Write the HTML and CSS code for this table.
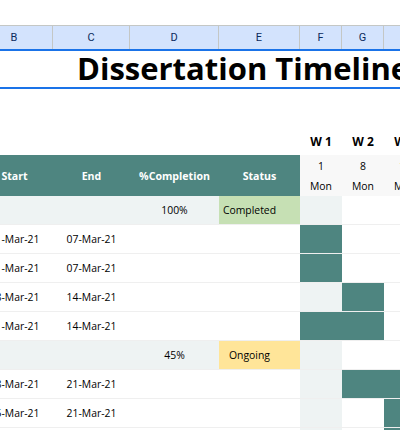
FILE: index.html
```html
<!DOCTYPE html>
<html lang="en-US">
<head>
    <meta charset="UTF-8">
    <title>Dissertation Timeline</title>
    <link rel="stylesheet" href="styles.css">
</head>
<body>

<div class="sheet">

    <div class="row colheads">
        <div>B</div><div>C</div><div>D</div><div>E</div><div>F</div><div>G</div><div>H</div>
    </div>

    <div class="title">Dissertation Timeline</div>

    <div class="gap"></div>

    <div class="row weeks">
        <div></div><div></div><div></div><div></div>
        <div>W 1</div><div>W 2</div><div>W 3</div>
    </div>

    <div class="row heads">
        <div class="th">Start</div>
        <div class="th">End</div>
        <div class="th">%Completion</div>
        <div class="th">Status</div>
        <div class="day"><span>1</span><span>Mon</span></div>
        <div class="day"><span>8</span><span>Mon</span></div>
        <div class="day"><span>15</span><span>Mon</span></div>
    </div>

    <div class="row task phase">
        <div></div><div></div><div>100%</div>
        <div class="status done">Completed</div>
        <div class="now"></div><div></div><div></div>
    </div>
    <div class="row task">
        <div>01-Mar-21</div><div>07-Mar-21</div><div></div><div></div>
        <div class="bar"></div><div></div><div></div>
    </div>
    <div class="row task">
        <div>01-Mar-21</div><div>07-Mar-21</div><div></div><div></div>
        <div class="bar"></div><div></div><div></div>
    </div>
    <div class="row task">
        <div>08-Mar-21</div><div>14-Mar-21</div><div></div><div></div>
        <div class="now"></div><div class="bar"></div><div></div>
    </div>
    <div class="row task">
        <div>01-Mar-21</div><div>14-Mar-21</div><div></div><div></div>
        <div class="bar"></div><div class="bar"></div><div></div>
    </div>

    <div class="row task phase">
        <div></div><div></div><div>45%</div>
        <div class="status ongoing">Ongoing</div>
        <div class="now"></div><div></div><div></div>
    </div>
    <div class="row task">
        <div>08-Mar-21</div><div>21-Mar-21</div><div></div><div></div>
        <div class="now"></div><div class="bar"></div><div class="bar"></div>
    </div>
    <div class="row task">
        <div>15-Mar-21</div><div>21-Mar-21</div><div></div><div></div>
        <div class="now"></div><div></div><div class="bar"></div>
    </div>
    <div class="row task">
        <div>15-Mar-21</div><div>21-Mar-21</div><div></div><div></div>
        <div class="now"></div><div></div><div class="bar"></div>
    </div>

</div>

</body>
</html>
```

FILE: styles.css
```css
html, body {
    margin: 0;
    overflow: hidden;
    background-color: #ffffff;
}
body {
    font-family: "Open Sans", "Noto Sans", sans-serif;
    font-size: 10.4px;
    color: #000000;
}
.sheet {
    width: 450px;
    margin-left: -24px;
    padding-top: 25px;
}
.row {
    display: grid;
    grid-template-columns: 77px 77px 89px 81px 42px 42px 42px;
}
.row > div {
    display: flex;
    align-items: center;
    justify-content: center;
    white-space: nowrap;
    overflow: hidden;
}

/* spreadsheet column letters */
.colheads {
    height: 23px;
    background-color: #d3e3fd;
    border-top: 1px solid #c4c7c5;
    border-bottom: 2px solid #1a73e8;
    font-family: Roboto, "Liberation Sans", sans-serif;
    font-size: 11px;
    color: #0b2a5c;
}
.colheads > div {
    border-right: 1px solid #c4c7c5;
}

.title {
    height: 36px;
    padding-left: 101px;
    border-bottom: 2px solid #1a73e8;
    font-size: 31px;
    font-weight: bold;
    line-height: 34px;
    white-space: nowrap;
}
.gap {
    height: 39px;
}

.weeks {
    height: 27px;
    font-size: 12px;
    font-weight: bold;
}

.heads {
    height: 41px;
}
.heads .th {
    background-color: #4e8580;
    color: #ffffff;
    font-weight: bold;
    font-size: 10.6px;
}
.heads .day {
    flex-direction: column;
    background-color: #f8f8f8;
    line-height: 20px;
}

.task {
    height: 28px;
    border-bottom: 1px solid #efefef;
}
.phase > div {
    background-color: #eef3f3;
}
.phase > div:nth-child(n+6) {
    background-color: #ffffff;
}
.status {
    padding-right: 20px;
}
.phase .status.done {
    background-color: #c6e0b4;
}
.phase .status.ongoing {
    background-color: #ffe599;
}
.now {
    background-color: #eef3f3;
}
.bar {
    background-color: #4e8580;
}
```
